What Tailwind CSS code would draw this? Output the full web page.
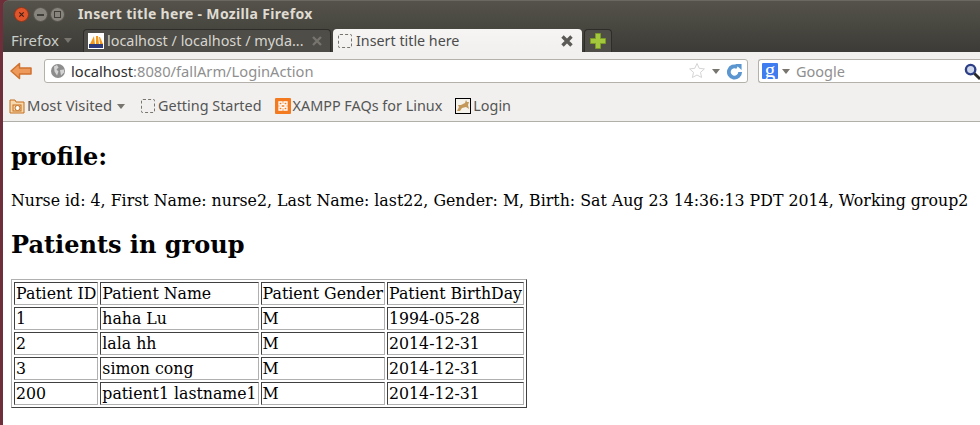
<!DOCTYPE html>
<html lang="en">

<head>
  <meta charset="UTF-8">
  <meta name="viewport" content="width=device-width, initial-scale=1.0">
  <title>Insert title here - Mozilla Firefox</title>
  <script src="https://cdn.jsdelivr.net/npm/@tailwindcss/browser@4"></script>
</head>

<body class="bg-[#6e2f3a] h-[425px] w-[980px] overflow-hidden pl-[3px] font-['Noto_Sans',sans-serif]">
  <!-- title bar -->
  <header class="h-[28px] flex items-center bg-gradient-to-b from-[#54524b] to-[#47463f] rounded-tl-md border-t border-[#6a6860]">
    <div class="flex items-center ml-[11px]">
      <span class="w-[15px] h-[15px] rounded-full bg-[#e2542a] border border-[#8e3518] flex items-center justify-center">
        <svg width="7" height="7" viewBox="0 0 8 8"><path d="M1.5 1.5l5 5M6.5 1.5l-5 5" stroke="#3c2018" stroke-width="1.2"/></svg>
      </span>
      <span class="ml-[4px] w-[15px] h-[15px] rounded-full bg-[#86847c] border border-[#55534c] flex items-center justify-center">
        <span class="w-[7px] h-[2px] bg-[#3f3e39]"></span>
      </span>
      <span class="ml-[2px] w-[15px] h-[15px] rounded-full bg-[#86847c] border border-[#55534c] flex items-center justify-center">
        <span class="w-[7px] h-[7px] border border-[#3f3e39]"></span>
      </span>
    </div>
    <h1 class="ml-[13px] -mt-[2px] text-[14px] font-bold text-[#dfdbd2] tracking-[0.32px] whitespace-nowrap">Insert title here - Mozilla Firefox</h1>
  </header>

  <!-- tab strip -->
  <div class="h-[24px] flex items-end bg-gradient-to-b from-[#47463f] to-[#3c3b37] pl-[8px]">
    <div class="w-[72px] h-[24px] flex items-center gap-[5px] text-[15px] text-[#c9cdc9]">
      Firefox
      <span class="border-x-[4px] border-x-transparent border-t-[5px] border-t-[#77756e] mt-[1px]"></span>
    </div>
    <div class="w-[248px] h-[23px] flex items-center pl-[4px] bg-[#4e4d47] border border-b-0 border-[#2e2d2a] rounded-t-[4px] text-[14.4px] text-[#d6d5cf]">
      <svg width="16" height="16" viewBox="0 0 16 16" class="shrink-0">
        <rect width="16" height="16" fill="#fff"/>
        <path d="M2 11L6 3l1 8zM8 11l0-8 2 0 1 8zM11 4l1 0 3 7-3 0z" fill="#f39a1e"/>
        <rect x="1" y="11" width="14" height="4" fill="#2d3a7c"/>
      </svg>
      <span class="ml-[3px] whitespace-nowrap">localhost / localhost / myda...</span>
      <svg width="12" height="12" viewBox="0 0 12 12" class="ml-[7px] shrink-0"><path d="M2 2l8 8M10 2l-8 8" stroke="#76746d" stroke-width="2.4"/></svg>
    </div>
    <div class="w-[249px] h-[23px] ml-[2px] flex items-center pl-[5px] bg-gradient-to-b from-[#f6f5f4] to-[#f1f0ee] rounded-t-[4px] text-[14.300px] text-[#4c4c4c]">
      <span class="w-[14px] h-[14px] border border-dashed border-[#77756e] rounded-[2px] shrink-0"></span>
      <span class="ml-[4px]">Insert title here</span>
      <svg width="14" height="14" viewBox="0 0 14 14" class="ml-auto mr-[8px] shrink-0"><path d="M2.500 2.500l9 9M11.500 2.500l-9 9" stroke="#5b5a56" stroke-width="3.400"/></svg>
    </div>
    <div class="w-[28px] h-[23px] ml-[2px] flex items-center justify-center bg-[#4e4d47] border border-b-0 border-[#2e2d2a] rounded-t-[4px]">
      <svg width="16" height="16" viewBox="0 0 16 16"><path d="M5.500 0.500h5v5h5v5h-5v5h-5v-5h-5v-5h5z" fill="#a3c83c" stroke="#7b9a27"/></svg>
    </div>
  </div>

  <!-- nav bar -->
  <nav class="h-[38px] flex items-center bg-[#f1f0ee]">
    <svg width="24" height="20" viewBox="0 0 24 20" class="ml-[6px] shrink-0">
      <path d="M10.500 2.500L2 10l8.500 7.500v-4.500h11.500v-6H10.500z" fill="#ee9a5c" stroke="#d0722f" stroke-width="1.500" stroke-linejoin="round"/>
    </svg>
    <div class="ml-[11px] w-[704px] h-[24px] flex items-center bg-white border border-[#b3b1a9] rounded-[3px] text-[14.700px] text-[#8f8f8f]">
      <svg width="14" height="14" viewBox="0 0 14 14" class="ml-[6px] shrink-0">
        <circle cx="7" cy="7" r="7" fill="#8d8d8d"/>
        <path d="M3 2.500l3-1.500 1.500 2.500-2 2 2 2-1.500 4-2.500-4zM9 6l4-.5 0 3-3 3z" fill="#d4d4d4"/>
      </svg>
      <span class="ml-[6px] whitespace-nowrap"><span class="text-[#303030]">localhost</span>:8080/fallArm/LoginAction</span>
      <svg width="18" height="18" viewBox="0 0 18 18" class="ml-auto shrink-0"><path d="M9 1.500l2.200 4.800 5.200.6-3.900 3.500 1.100 5.100L9 13l-4.600 2.500 1.100-5.100-3.900-3.500 5.200-.6z" fill="#fff" stroke="#d4d4d4"/></svg>
      <span class="ml-[6px] border-x-[4px] border-x-transparent border-t-[5px] border-t-[#77756e]"></span>
      <svg width="17" height="17" viewBox="0 0 18 18" class="ml-[6px] mr-[4px] shrink-0">
        <path d="M15 9.500a6 6 0 1 1-3-5.200" fill="none" stroke="#5b96d0" stroke-width="4"/>
        <path d="M9.500 1h7v6.500z" fill="#5b96d0"/>
      </svg>
    </div>
    <div class="ml-[10px] flex-1 h-[24px] flex items-center bg-white border border-r-0 border-[#b3b1a9] rounded-l-[3px] text-[14.500px] text-[#8f8f8f]">
      <span class="ml-[3px] w-[16px] h-[16px] bg-[#3f7cf0] rounded-[1px] text-white text-[21px] leading-[14px] text-center font-['Liberation_Serif',serif]">g</span>
      <span class="ml-[4px] border-x-[4px] border-x-transparent border-t-[5px] border-t-[#77756e]"></span>
      <span class="ml-[6px] mt-[1px]">Google</span>
      <svg width="17" height="17" viewBox="0 0 18 18" class="ml-auto -mr-[1px] shrink-0">
        <circle cx="7" cy="7" r="5" fill="#cfd8ea" stroke="#2d3f86" stroke-width="2.500"/>
        <path d="M11 11l6 6" stroke="#2a2a2a" stroke-width="3"/>
      </svg>
    </div>
  </nav>

  <!-- bookmarks -->
  <div class="h-[32px] flex items-center bg-[#f1f0ee] border-b border-[#b0afa9] text-[14.400px] text-[#555555]">
    <svg width="16" height="16" viewBox="0 0 16 16" class="ml-[6px] shrink-0">
      <path d="M1 2h5l1 2h8v11H1z" fill="#f7d9b0" stroke="#c46f1e"/>
      <rect x="4" y="7" width="8" height="6" fill="none" stroke="#c46f1e"/>
      <circle cx="8.500" cy="10" r="2.500" fill="#fff" stroke="#c46f1e"/>
    </svg>
    <span class="ml-[2px] whitespace-nowrap text-[14.800px]">Most Visited</span>
    <span class="ml-[5px] mt-[1px] border-x-[4px] border-x-transparent border-t-[5px] border-t-[#77756e]"></span>
    <span class="ml-[16px] w-[14px] h-[14px] border border-dashed border-[#77756e] rounded-[2px]"></span>
    <span class="ml-[3px] whitespace-nowrap">Getting Started</span>
    <span class="ml-[13px] w-[16px] h-[16px] bg-[#f47a20] rounded-[1px] flex items-center justify-center">
      <svg width="12" height="12" viewBox="0 0 12 12"><path d="M2 2h3v2.500h2V2h3v3H8v2h2v3H7V7.500H5V10H2V7h2V5H2z" fill="none" stroke="#fff" stroke-width="1.300"/></svg>
    </span>
    <span class="ml-[2px] whitespace-nowrap">XAMPP FAQs for Linux</span>
    <span class="ml-[13px] w-[16px] h-[16px] border border-black bg-[#f4f2ea] flex items-center justify-center">
      <svg width="14" height="14" viewBox="0 0 14 14"><path d="M1 12l2-4-1-2 3 0 4-2 1-3 1 2 2 0-1 3 1 4-3-2-4 1-2 3z" fill="#c4985a"/></svg>
    </span>
    <span class="ml-[2px]">Login</span>
  </div>

  <!-- page content -->
  <main class="bg-white h-[304px] px-[8px] pt-[20px] text-black text-[15.800px] leading-[normal] font-['DejaVu_Serif',serif]">
    <h2 class="text-[24px] font-bold">profile:</h2>
    <p class="mt-[20px] whitespace-nowrap">Nurse id: 4, First Name: nurse2, Last Name: last22, Gender: M, Birth: Sat Aug 23 14:36:13 PDT 2014, Working group2</p>
    <h2 class="mt-[20px] text-[24px] font-bold">Patients in group</h2>
    <table class="mt-[20px] text-[15.750px] border-separate border-spacing-[2px] border border-t-[#b0b0b0] border-l-[#b0b0b0] border-r-[#404040] border-b-[#404040]">
      <tbody>
        <tr>
          <td class="p-[1px] border border-t-[#404040] border-l-[#404040] border-r-[#b0b0b0] border-b-[#b0b0b0]">Patient ID</td>
          <td class="p-[1px] border border-t-[#404040] border-l-[#404040] border-r-[#b0b0b0] border-b-[#b0b0b0]">Patient Name</td>
          <td class="p-[1px] border border-t-[#404040] border-l-[#404040] border-r-[#b0b0b0] border-b-[#b0b0b0]">Patient Gender</td>
          <td class="p-[1px] border border-t-[#404040] border-l-[#404040] border-r-[#b0b0b0] border-b-[#b0b0b0]">Patient BirthDay</td>
        </tr>
        <tr>
          <td class="p-[1px] border border-t-[#404040] border-l-[#404040] border-r-[#b0b0b0] border-b-[#b0b0b0]">1</td>
          <td class="p-[1px] border border-t-[#404040] border-l-[#404040] border-r-[#b0b0b0] border-b-[#b0b0b0]">haha Lu</td>
          <td class="p-[1px] border border-t-[#404040] border-l-[#404040] border-r-[#b0b0b0] border-b-[#b0b0b0]">M</td>
          <td class="p-[1px] border border-t-[#404040] border-l-[#404040] border-r-[#b0b0b0] border-b-[#b0b0b0]">1994-05-28</td>
        </tr>
        <tr>
          <td class="p-[1px] border border-t-[#404040] border-l-[#404040] border-r-[#b0b0b0] border-b-[#b0b0b0]">2</td>
          <td class="p-[1px] border border-t-[#404040] border-l-[#404040] border-r-[#b0b0b0] border-b-[#b0b0b0]">lala hh</td>
          <td class="p-[1px] border border-t-[#404040] border-l-[#404040] border-r-[#b0b0b0] border-b-[#b0b0b0]">M</td>
          <td class="p-[1px] border border-t-[#404040] border-l-[#404040] border-r-[#b0b0b0] border-b-[#b0b0b0]">2014-12-31</td>
        </tr>
        <tr>
          <td class="p-[1px] border border-t-[#404040] border-l-[#404040] border-r-[#b0b0b0] border-b-[#b0b0b0]">3</td>
          <td class="p-[1px] border border-t-[#404040] border-l-[#404040] border-r-[#b0b0b0] border-b-[#b0b0b0]">simon cong</td>
          <td class="p-[1px] border border-t-[#404040] border-l-[#404040] border-r-[#b0b0b0] border-b-[#b0b0b0]">M</td>
          <td class="p-[1px] border border-t-[#404040] border-l-[#404040] border-r-[#b0b0b0] border-b-[#b0b0b0]">2014-12-31</td>
        </tr>
        <tr>
          <td class="p-[1px] border border-t-[#404040] border-l-[#404040] border-r-[#b0b0b0] border-b-[#b0b0b0]">200</td>
          <td class="p-[1px] border border-t-[#404040] border-l-[#404040] border-r-[#b0b0b0] border-b-[#b0b0b0]">patient1 lastname1</td>
          <td class="p-[1px] border border-t-[#404040] border-l-[#404040] border-r-[#b0b0b0] border-b-[#b0b0b0]">M</td>
          <td class="p-[1px] border border-t-[#404040] border-l-[#404040] border-r-[#b0b0b0] border-b-[#b0b0b0]">2014-12-31</td>
        </tr>
      </tbody>
    </table>
  </main>
</body>

</html>
